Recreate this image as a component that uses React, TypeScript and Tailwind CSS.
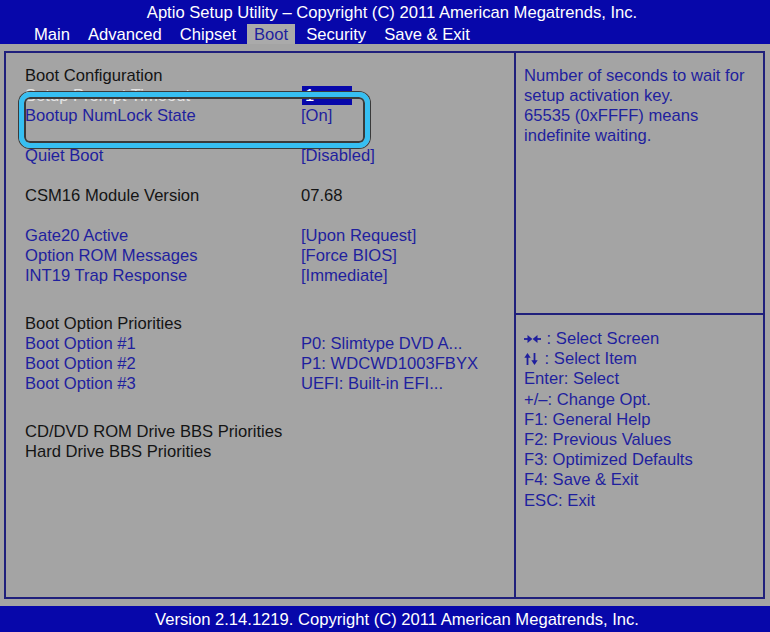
import React from "react";

const F = "font-['Liberation_Sans',Arial,sans-serif]";
const BLUE_TXT = "text-[#1f1f9e]";
const BLACK_TXT = "text-[#141414]";

function Row({ label, value, blue = true }: { label: string; value?: React.ReactNode; blue?: boolean }) {
  return (
    <div className={`grid grid-cols-[276px_1fr] h-[20px] leading-[20px] ${blue ? BLUE_TXT : BLACK_TXT}`}>
      <div className="whitespace-nowrap">{label}</div>
      <div className="whitespace-nowrap">{value}</div>
    </div>
  );
}

function Gap({ h = 20 }: { h?: number }) {
  return <div style={{ height: h }} />;
}

function LeftRightArrows() {
  return (
    <svg width="17" height="10" viewBox="0 0 17 10" className="inline-block mr-[1px] align-[0px]">
      <path d="M0 5 H6" stroke="#1f1f9e" strokeWidth="1.8" />
      <polygon points="3.5,1 8.4,5 3.5,9" fill="#1f1f9e" />
      <polygon points="13.5,1 8.6,5 13.5,9" fill="#1f1f9e" />
      <path d="M11 5 H17" stroke="#1f1f9e" strokeWidth="1.8" />
    </svg>
  );
}

function UpDownArrows() {
  return (
    <svg width="15" height="12" viewBox="0 0 15 12" className="inline-block mr-[1px] align-[-1px]">
      <path d="M3.5 12 V3" stroke="#1f1f9e" strokeWidth="1.8" />
      <polygon points="0.3,4.8 3.5,0 6.7,4.8" fill="#1f1f9e" />
      <path d="M10.5 0 V9" stroke="#1f1f9e" strokeWidth="1.8" />
      <polygon points="7.3,7.2 10.5,12 13.7,7.2" fill="#1f1f9e" />
    </svg>
  );
}

export default function App() {
  const tabs = ["Main", "Advanced", "Chipset", "Boot", "Security", "Save & Exit"];
  return (
    <div className={`${F} w-[770px] h-[632px] bg-[#a4a4a4] text-[16.6px] flex flex-col overflow-hidden relative`}>
      {/* Header */}
      <div className="bg-[#0707aa] h-[44px] flex flex-col text-white">
        <div className="h-[24px] pt-[3px] leading-[20px] text-center whitespace-nowrap pl-[14px]">
          Aptio Setup Utility – Copyright (C) 2011 American Megatrends, Inc.
        </div>
        <div className="h-[20px] flex pl-[27px] gap-[4px] leading-[21px]">
          {tabs.map((t) => (
            <div
              key={t}
              className={`px-[7px] whitespace-nowrap ${t === "Boot" ? "bg-[#aaaaaa] text-[#1f1f9e]" : ""}`}
            >
              {t}
            </div>
          ))}
        </div>
      </div>

      {/* Main panel */}
      <div className="mt-[7px] ml-[4px] mr-[5px] h-[548px] border-2 border-[#20207c] flex">
        <div className="w-[510px] border-r-2 border-[#20207c] pl-[19px] pt-[13px]">
          <Row label="Boot Configuration" blue={false} />
          <div className="grid grid-cols-[276px_1fr] h-[20px] leading-[20px]">
            <div className="whitespace-nowrap text-[#e4e4e4]">Setup Prompt Timeout</div>
            <div className="pl-[1px]">
              <div className="w-[50px] h-[19px] bg-[#0707aa] text-white leading-[19px] pl-[3px]">1</div>
            </div>
          </div>
          <Row label="Bootup NumLock State" value="[On]" />
          <Gap />
          <Row label="Quiet Boot" value="[Disabled]" />
          <Gap />
          <Row label="CSM16 Module Version" value="07.68" blue={false} />
          <Gap />
          <Row label="Gate20 Active" value="[Upon Request]" />
          <Row label="Option ROM Messages" value="[Force BIOS]" />
          <Row label="INT19 Trap Response" value="[Immediate]" />
          <Gap h={28} />
          <Row label="Boot Option Priorities" blue={false} />
          <Row label="Boot Option #1" value="P0: Slimtype DVD A..." />
          <Row label="Boot Option #2" value="P1: WDCWD1003FBYX" />
          <Row label="Boot Option #3" value="UEFI: Built-in EFI..." />
          <Gap h={28} />
          <Row label="CD/DVD ROM Drive BBS Priorities" blue={false} />
          <Row label="Hard Drive BBS Priorities" blue={false} />
        </div>
        <div className="flex-1 flex flex-col">
          <div className={`h-[262px] border-b-2 border-[#20207c] pl-[8px] pt-[13px] leading-[20px] ${BLUE_TXT}`}>
            <div>Number of seconds to wait for</div>
            <div>setup activation key.</div>
            <div>65535 (0xFFFF) means</div>
            <div>indefinite waiting.</div>
          </div>
          <div className={`pl-[8px] pt-[14px] leading-[20.2px] ${BLUE_TXT}`}>
            <div className="whitespace-nowrap"><LeftRightArrows /> : Select Screen</div>
            <div className="whitespace-nowrap"><UpDownArrows /> : Select Item</div>
            <div>Enter: Select</div>
            <div>+/–: Change Opt.</div>
            <div>F1: General Help</div>
            <div>F2: Previous Values</div>
            <div>F3: Optimized Defaults</div>
            <div>F4: Save &amp; Exit</div>
            <div>ESC: Exit</div>
          </div>
        </div>
      </div>

      {/* Footer */}
      <div className="mt-auto bg-[#0707aa] h-[26px] text-white text-center leading-[27px] whitespace-nowrap pl-[24px]">
        Version 2.14.1219. Copyright (C) 2011 American Megatrends, Inc.
      </div>

      {/* Highlight overlay */}
      <div className="absolute left-[19px] top-[92px] w-[351px] h-[56px] rounded-[11px] border-[5px] border-[#36bff2] shadow-[0_0_0_1px_#3a3a3a,inset_0_0_0_2px_#3a3a3a] pointer-events-none" />
    </div>
  );
}
